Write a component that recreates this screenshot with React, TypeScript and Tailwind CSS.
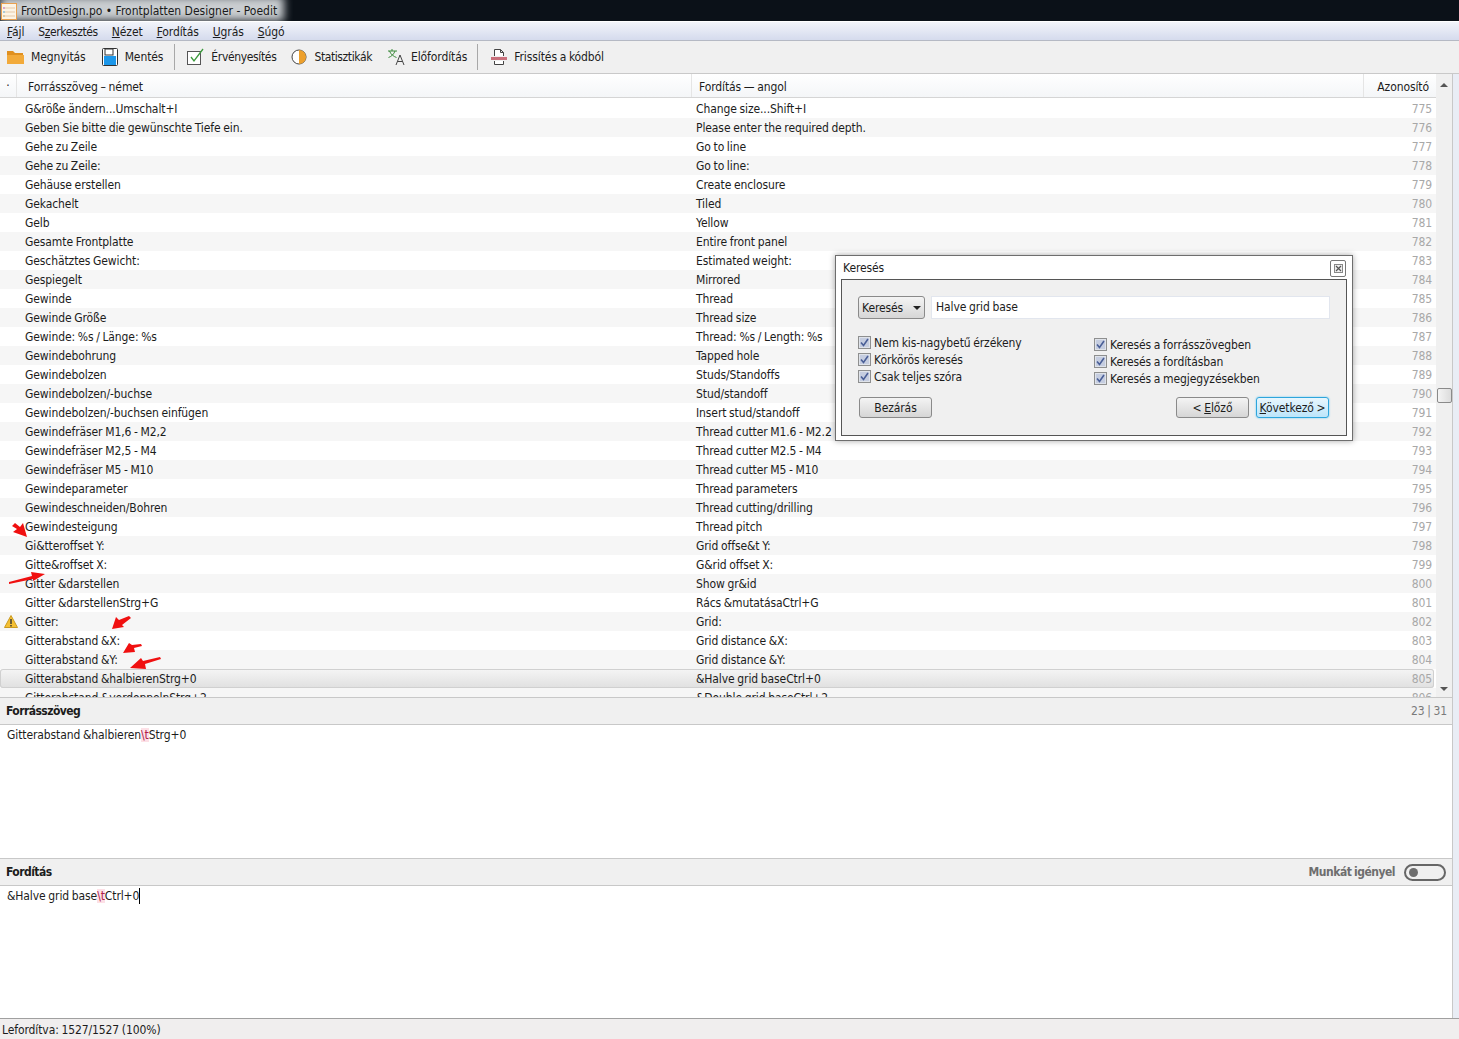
const rows: [string, string][] = [
  ['G&röße ändern...Umschalt+I', 'Change size...Shift+I'],
  ['Geben Sie bitte die gewünschte Tiefe ein.', 'Please enter the required depth.'],
  ['Gehe zu Zeile', 'Go to line'],
  ['Gehe zu Zeile:', 'Go to line:'],
  ['Gehäuse erstellen', 'Create enclosure'],
  ['Gekachelt', 'Tiled'],
  ['Gelb', 'Yellow'],
  ['Gesamte Frontplatte', 'Entire front panel'],
  ['Geschätztes Gewicht:', 'Estimated weight:'],
  ['Gespiegelt', 'Mirrored'],
  ['Gewinde', 'Thread'],
  ['Gewinde Größe', 'Thread size'],
  ['Gewinde: %s / Länge: %s', 'Thread: %s / Length: %s'],
  ['Gewindebohrung', 'Tapped hole'],
  ['Gewindebolzen', 'Studs/Standoffs'],
  ['Gewindebolzen/-buchse', 'Stud/standoff'],
  ['Gewindebolzen/-buchsen einfügen', 'Insert stud/standoff'],
  ['Gewindefräser M1,6 - M2,2', 'Thread cutter M1.6 - M2.2'],
  ['Gewindefräser M2,5 - M4', 'Thread cutter M2.5 - M4'],
  ['Gewindefräser M5 - M10', 'Thread cutter M5 - M10'],
  ['Gewindeparameter', 'Thread parameters'],
  ['Gewindeschneiden/Bohren', 'Thread cutting/drilling'],
  ['Gewindesteigung', 'Thread pitch'],
  ['Gi&tteroffset Y:', 'Grid offse&t Y:'],
  ['Gitte&roffset X:', 'G&rid offset X:'],
  ['Gitter &darstellen', 'Show gr&id'],
  ['Gitter &darstellenStrg+G', 'Rács &mutatásaCtrl+G'],
  ['Gitter:', 'Grid:'],
  ['Gitterabstand &X:', 'Grid distance &X:'],
  ['Gitterabstand &Y:', 'Grid distance &Y:'],
  ['Gitterabstand &halbierenStrg+0', '&Halve grid baseCtrl+0'],
  ['Gitterabstand &verdoppelnStrg+2', '&Double grid baseCtrl+2'],
]

const arrows = [
  'M12 526 L15 523 L20 527 L23 523 L27 537 L13 532 L17 529 Z',
  'M9 582 L32 576 L31 572 L45 574 L33 581 L33 579 L9 584 Z',
  'M131 618 L122 625 L124 627 L112 629 L116 617 L119 620 L129 616 Z',
  'M142 646 L134 648 L135 652 L123 653 L129 643 L132 645 L141 644 Z',
  'M161 659 L145 664 L146 669 L130 668 L141 658 L143 661 L160 657 Z',
]

function MenuItem({ first, rest }: { first: string; rest: string }) {
  return (
    <span>
      <span className="underline">{first}</span>
      {rest}
    </span>
  )
}

function ToolSep() {
  return <div className="w-px h-[26px] bg-[#a8a8a8] mx-[6px]" />
}

function Check({ label }: { label: string }) {
  return (
    <div className="flex items-center gap-[3px] h-[17px]">
      <svg width="13" height="13" viewBox="0 0 13 13" className="shrink-0">
        <rect x="0.5" y="0.5" width="12" height="12" fill="#dfe3ea" stroke="#8e8f8f" />
        <rect x="2" y="2" width="9" height="9" fill="#c5cde0" />
        <path d="M3 6.5 L5.5 9.5 L10 3" fill="none" stroke="#4a5f97" strokeWidth="1.6" />
      </svg>
      <span>{label}</span>
    </div>
  )
}

function DialogButton({ children, focus }: { children: React.ReactNode; focus?: boolean }) {
  return (
    <div
      className={
        focus
          ? 'w-[73px] h-[21px] flex items-center justify-center rounded-[3px] border border-[#2ea5dc] bg-gradient-to-b from-[#e8f6fd] to-[#bce5fa] shadow-[0_0_2px_#5cc4f0]'
          : 'w-[73px] h-[21px] flex items-center justify-center rounded-[3px] border border-[#8a8a8a] bg-gradient-to-b from-[#f4f4f4] to-[#d6d6d6]'
      }
    >
      {children}
    </div>
  )
}

export default function App() {
  return (
    <div className="relative w-[1459px] h-[1039px] overflow-hidden bg-white text-[12px] leading-[16px] tracking-[-0.1px] [word-spacing:-0.6px] text-[#1c1c1c] flex flex-col font-['DejaVu_Sans_Condensed','Noto_Sans',sans-serif]">
      {/* Title bar */}
      <div className="relative h-[21px] shrink-0 bg-[#0b1118] flex items-center overflow-hidden">
        <div className="absolute left-0 top-[-4px] w-[284px] h-[25px] bg-[#c9cdd0] blur-[4px]" />
        <svg width="17" height="18" viewBox="0 0 17 18" className="relative ml-px">
          <rect x="0.5" y="1.5" width="15" height="16" fill="#fbf4e6" stroke="#e8a050" />
          <path d="M2 6h12M2 10h12M2 14h12" stroke="#e6c9a8" />
          <rect x="2" y="5" width="2" height="2" fill="#d9a5c9" />
          <rect x="2" y="9" width="2" height="2" fill="#a5c9d9" />
          <rect x="2" y="13" width="2" height="2" fill="#d9c9a5" />
        </svg>
        <span className="relative ml-[3px] text-[#1a1a1a] tracking-normal [word-spacing:0px]">FrontDesign.po • Frontplatten Designer - Poedit</span>
      </div>

      {/* Menu bar */}
      <div className="h-[20px] shrink-0 border-t border-white bg-gradient-to-b from-[#f2f4fa] to-[#d5dbed] border-b-[#b5b9c4] border-b flex items-center gap-[14px] pl-[7px] pt-px">
        <MenuItem first="F" rest="ájl" />
        <span className="tracking-[-0.4px]">S<span className="underline">z</span>erkesztés</span>
        <MenuItem first="N" rest="ézet" />
        <MenuItem first="F" rest="ordítás" />
        <MenuItem first="U" rest="grás" />
        <MenuItem first="S" rest="úgó" />
      </div>

      {/* Toolbar */}
      <div className="h-[33px] shrink-0 bg-[#f0f0f0] border-b border-[#c9c9c9] flex items-center pl-[6px]">
        <svg width="19" height="16" viewBox="0 0 19 16">
          <path d="M1 2h6l2 2h8v11H1z" fill="#e0901f" />
          <path d="M1 6h17v9H1z" fill="#f2aa3a" />
        </svg>
        <span className="ml-[6px]">Megnyitás</span>
        <svg width="16" height="18" viewBox="0 0 16 18" className="ml-[16px]">
          <rect x="0.5" y="0.5" width="15" height="17" rx="1" fill="#fff" stroke="#333" />
          <rect x="3" y="1" width="8" height="6" fill="#fff" stroke="#333" />
          <rect x="2" y="8" width="12" height="9" fill="#1c97ea" />
        </svg>
        <span className="ml-[7px]">Mentés</span>
        <div className="ml-[5px]"><ToolSep /></div>
        <svg width="18" height="18" viewBox="0 0 18 18" className="ml-[6px]">
          <rect x="0.5" y="3.5" width="13" height="13" fill="#fff" stroke="#555" />
          <path d="M4 9l3 4 9-12" fill="none" stroke="#3c9a3c" strokeWidth="1.3" />
        </svg>
        <span className="ml-[6px] tracking-[-0.35px]">Érvényesítés</span>
        <svg width="16" height="16" viewBox="0 0 16 16" className="ml-[15px]">
          <circle cx="8" cy="8" r="7" fill="#fff" stroke="#444" />
          <path d="M8 8V1a7 7 0 0 1 7 7z M8 8h7a7 7 0 0 1-7 7z" fill="#eda02c" />
        </svg>
        <span className="ml-[7px] tracking-[-0.4px]">Statisztikák</span>
        <svg width="18" height="18" viewBox="0 0 18 18" className="ml-[15px]">
          <path d="M1 3h9M5 1v2M2.5 3c1 3 4 5.500 7 6.500M8 3c-1 3-3.500 5.500-6.500 6.500" fill="none" stroke="#3c8a3c" />
          <path d="M9 17l4-10 4 10M10.500 13.500h5" fill="none" stroke="#444" />
        </svg>
        <span className="ml-[6px]">Előfordítás</span>
        <div className="ml-[4px]"><ToolSep /></div>
        <svg width="16" height="18" viewBox="0 0 16 18" className="ml-[7px]">
          <path d="M3.500 8V1.500h6l3 3V8M3.500 13v3.500h9V13M9.500 1.500v3h3" fill="#fff" stroke="#444" />
          <rect x="0" y="9" width="16" height="3" fill="#c9707c" />
        </svg>
        <span className="ml-[7px]">Frissítés a kódból</span>
      </div>

      {/* List + scrollbar */}
      <div className="h-[623px] shrink-0 flex">
        <div className="w-[1436px] flex flex-col overflow-hidden">
          <div className="h-[24px] shrink-0 flex items-center bg-gradient-to-b from-white to-[#f4f6f8] border-b border-[#d5d5d5]">
            <div className="w-[17px] h-full border-r border-[#e5e5e5] text-center leading-[24px]">·</div>
            <div className="w-[675px] h-full border-r border-[#e5e5e5] pl-[11px] leading-[26px]">Forrásszöveg – német</div>
            <div className="w-[672px] h-full border-r border-[#e5e5e5] pl-[7px] leading-[26px]">Fordítás — angol</div>
            <div className="flex-1 text-right pr-[7px] leading-[26px] h-full">Azonosító</div>
          </div>
          <div className="flex-1 overflow-hidden pt-px">
            {rows.map((row, i) => {
              const selected = i === 30
              const bg = selected
                ? 'bg-gradient-to-b from-[#f5f5f5] to-[#e0e0e0] shadow-[inset_0_0_0_1px_#d0d0d0] rounded-[3px] mr-[2px]'
                : i % 2 === 1
                  ? 'bg-[#f6f6f6]'
                  : 'bg-white'
              return (
                <div key={i} className={`h-[19px] flex items-center ${bg}`}>
                  <div className="w-[25px] shrink-0 flex justify-center">
                    {i === 27 && (
                      <svg width="14" height="13" viewBox="0 0 14 13" className="-ml-[3px]">
                        <path d="M7 0.500L13.500 12.500H0.500Z" fill="#f5c033" stroke="#c99a20" />
                        <path d="M7 4v5M7 10v1.500" stroke="#333" strokeWidth="1.400" />
                      </svg>
                    )}
                  </div>
                  <div className="w-[671px] shrink-0 whitespace-nowrap">{row[0]}</div>
                  <div className="w-[700px] shrink-0 whitespace-nowrap">{row[1]}</div>
                  <div className="w-[36px] shrink-0 text-right text-[#a8a8a8]">{775 + i}</div>
                </div>
              )
            })}
          </div>
        </div>
        <div className="w-[17px] bg-[#f0f0f0] border-r border-[#c8c8c8] flex flex-col items-center">
          <div className="mt-[9px] w-0 h-0 border-x-[4px] border-x-transparent border-b-[4px] border-b-[#555]" />
          <div className="mt-[301px] w-[15px] h-[15px] rounded-[2px] border border-[#8a8a8a] bg-gradient-to-r from-[#f4f4f4] to-[#dcdcdc]" />
          <div className="mt-auto mb-[6px] w-0 h-0 border-x-[4px] border-x-transparent border-t-[4px] border-t-[#555]" />
        </div>
        <div className="flex-1 bg-[#e9edf5]" />
      </div>

      {/* Source pane */}
      <div className="h-[28px] shrink-0 flex">
        <div className="flex-1 flex items-center justify-between pl-[6px] pr-[5px] bg-[#f0f0f0] border-y border-r border-[#c8c8c8]">
          <span className="font-bold tracking-[-0.55px]">Forrásszöveg</span>
          <span className="text-[#7a7a7a]">23 | 31</span>
        </div>
        <div className="w-[6px] bg-[#e9edf5]" />
      </div>
      <div className="h-[133px] shrink-0 flex">
        <div className="flex-1 pl-[7px] pt-[2px] border-r border-[#c8c8c8]">
          Gitterabstand &amp;halbieren<span className="bg-[#fde0e6] text-[#b0204a]">\t</span>Strg+0
        </div>
        <div className="w-[6px] bg-[#e9edf5]" />
      </div>

      {/* Translation pane */}
      <div className="h-[28px] shrink-0 flex">
        <div className="flex-1 flex items-center justify-between pl-[6px] pr-[6px] bg-[#f0f0f0] border-y border-r border-[#c8c8c8]">
          <span className="font-bold tracking-[-0.55px]">Fordítás</span>
          <div className="flex items-center gap-[9px]">
            <span className="font-bold tracking-[-0.5px] text-[#6e6e6e]">Munkát igényel</span>
            <div className="w-[42px] h-[17px] rounded-full border-2 border-[#666] flex items-center pl-[3px]">
              <div className="w-[9px] h-[9px] rounded-full bg-[#6e6e6e]" />
            </div>
          </div>
        </div>
        <div className="w-[6px] bg-[#e9edf5]" />
      </div>
      <div className="h-[132px] shrink-0 flex">
        <div className="flex-1 pl-[7px] pt-[2px] border-r border-[#c8c8c8] flex items-start">
          <span>
            &amp;Halve grid base<span className="bg-[#fde0e6] text-[#b0204a]">\t</span>Ctrl+0
          </span>
          <div className="w-px h-[16px] bg-black" />
        </div>
        <div className="w-[6px] bg-[#e9edf5]" />
      </div>

      {/* Status bar */}
      <div className="flex-1 bg-[#f0eeee] border-t border-[#a0a0a0] pl-[2px] pt-px flex items-center">
        Lefordítva: 1527/1527 (100%)
      </div>

      {/* Annotation arrows */}
      <svg width="1459" height="1039" className="absolute inset-0 pointer-events-none">
        {arrows.map((d) => (
          <path key={d} d={d} fill="#f01010" />
        ))}
      </svg>

      {/* Search dialog */}
      <div className="absolute left-[835px] top-[255px] w-[518px] h-[186px] bg-white border border-[#6e6e6e] shadow-[0_0_6px_rgba(0,0,0,0.35)] flex flex-col">
        <div className="h-[23px] shrink-0 flex items-center justify-between pl-[7px] pr-[6px]">
          <span>Keresés</span>
          <div className="w-[16px] h-[17px] mt-[2px] rounded-[2px] border border-[#777] flex items-center justify-center">
            <svg width="9" height="9" viewBox="0 0 9 9">
              <rect x="0.500" y="0.500" width="8" height="8" fill="#eee" stroke="#888" />
              <path d="M2 2l5 5M7 2l-5 5" stroke="#555" strokeWidth="1.200" />
            </svg>
          </div>
        </div>
        <div className="mx-[5px] h-[157px] border border-[#555] bg-[#f0f0f0] px-[16px] pt-[16px] flex flex-col">
          <div className="flex gap-[6px] h-[23px] shrink-0">
            <div className="w-[67px] rounded-[3px] border border-[#8a8a8a] bg-gradient-to-b from-[#f4f4f4] to-[#d6d6d6] flex items-center justify-between pl-[3px] pr-[3px]">
              <span>Keresés</span>
              <div className="w-0 h-0 border-x-[4px] border-x-transparent border-t-[4px] border-t-[#222]" />
            </div>
            <div className="w-[399px] bg-white border border-[#e2e6ee] pl-[4px] pb-[2px] flex items-center">Halve grid base</div>
          </div>
          <div className="flex mt-[15px]">
            <div className="w-[236px] flex flex-col">
              <Check label="Nem kis-nagybetű érzékeny" />
              <Check label="Körkörös keresés" />
              <Check label="Csak teljes szóra" />
            </div>
            <div className="flex flex-col mt-[2px]">
              <Check label="Keresés a forrásszövegben" />
              <Check label="Keresés a fordításban" />
              <Check label="Keresés a megjegyzésekben" />
            </div>
          </div>
          <div className="flex mt-[10px] pl-px">
            <DialogButton>Bezárás</DialogButton>
            <div className="ml-auto flex gap-[7px] pr-px">
              <DialogButton>
                <span>&lt; <span className="underline">E</span>lőző</span>
              </DialogButton>
              <DialogButton focus>
                <span><span className="underline">K</span>övetkező &gt;</span>
              </DialogButton>
            </div>
          </div>
        </div>
      </div>
    </div>
  )
}
